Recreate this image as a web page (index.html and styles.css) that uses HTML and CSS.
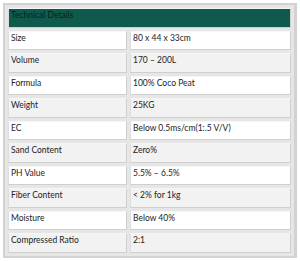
FILE: index.html
```html
<!DOCTYPE html>
<html lang="en">
<head>
<meta charset="utf-8">
<title>Technical Details</title>
<link rel="stylesheet" href="styles.css">
</head>
<body>
<table class="specs">
  <thead>
    <tr><th colspan="2" class="specs-head">Technical Details</th></tr>
  </thead>
  <tbody>
    <tr class="odd"><td class="key">Size</td><td>80 x 44 x 33cm</td></tr>
    <tr class="even"><td class="key">Volume</td><td>170 – 200L</td></tr>
    <tr class="odd"><td class="key">Formula</td><td>100% Coco Peat</td></tr>
    <tr class="even"><td class="key">Weight</td><td>25KG</td></tr>
    <tr class="odd"><td class="key">EC</td><td>Below 0.5ms/cm(1:.5 V/V)</td></tr>
    <tr class="even"><td class="key">Sand Content</td><td>Zero%</td></tr>
    <tr class="odd"><td class="key">PH Value</td><td>5.5% – 6.5%</td></tr>
    <tr class="even"><td class="key">Fiber Content</td><td>&lt; 2% for 1kg</td></tr>
    <tr class="odd"><td class="key">Moisture</td><td>Below 40%</td></tr>
    <tr class="even"><td class="key">Compressed Ratio</td><td>2:1</td></tr>
  </tbody>
</table>
</body>
</html>
```
FILE: styles.css
```css
html, body {
  margin: 0;
  background: #ffffff;
}

body {
  padding: 3px 0 0 3px;
  font-family: Lato, "Liberation Sans", sans-serif;
  font-size: 8.5px;
  color: #222222;
}

.specs {
  width: 294px;
  border-collapse: separate;
  border-spacing: 3px;
  border: 2px solid #d2d2d2;
  border-right-width: 3px;
  background: #e6e6e6;
}

.specs th,
.specs td {
  height: 14.5px;
  padding: 1px 2px 2px;
  vertical-align: top;
  text-align: left;
  font-weight: normal;
  border: 1px solid #cfcfcf;
  border-top-color: #f6f6f6;
  border-left-color: #dedede;
}

.specs-head {
  background: #0f5a4c;
  color: #0a1f1a;
  border-color: #0f5a4c;
  border-left: 1px solid #8a9e98;
}

.key {
  width: 113px;
}

.odd td {
  background: #ffffff;
}

.even td {
  background: #f2f2f2;
}
```
